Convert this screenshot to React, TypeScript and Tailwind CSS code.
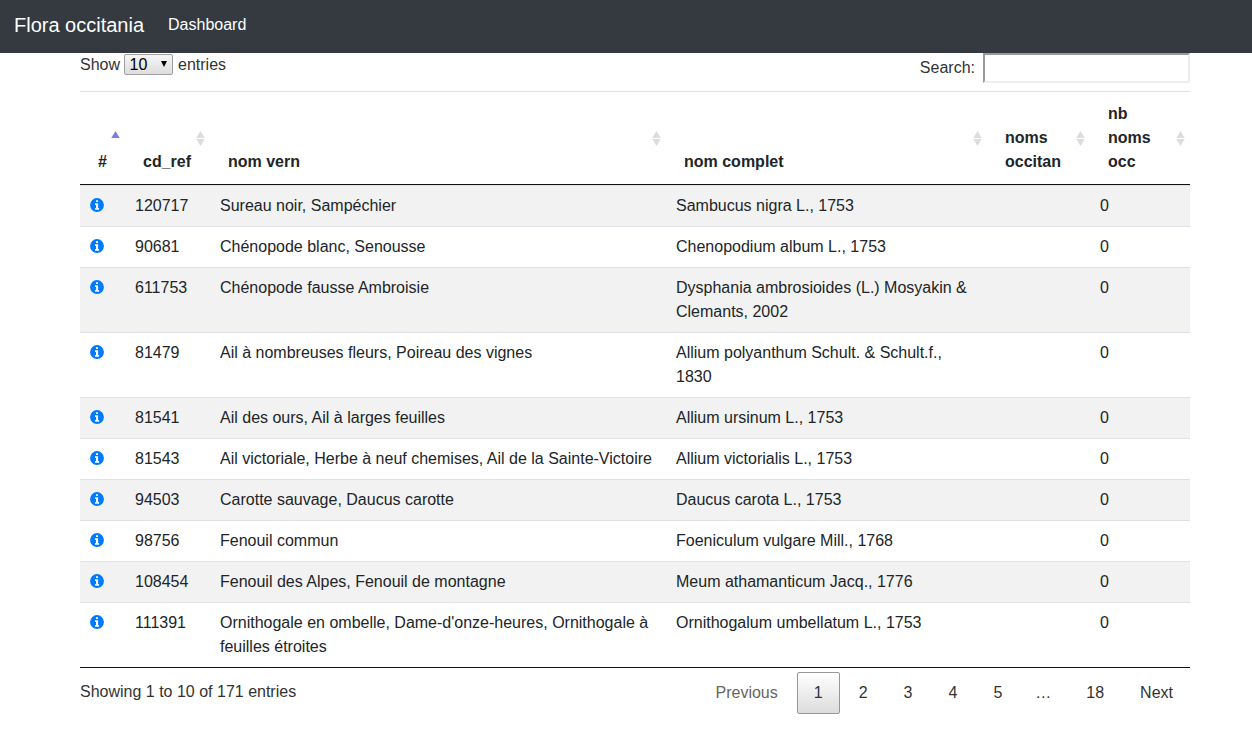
const rows = [
  ['120717', 'Sureau noir, Sampéchier', 'Sambucus nigra L., 1753'],
  ['90681', 'Chénopode blanc, Senousse', 'Chenopodium album L., 1753'],
  ['611753', 'Chénopode fausse Ambroisie', 'Dysphania ambrosioides (L.) Mosyakin & Clemants, 2002'],
  ['81479', 'Ail à nombreuses fleurs, Poireau des vignes', 'Allium polyanthum Schult. & Schult.f., 1830'],
  ['81541', 'Ail des ours, Ail à larges feuilles', 'Allium ursinum L., 1753'],
  ['81543', 'Ail victoriale, Herbe à neuf chemises, Ail de la Sainte-Victoire', 'Allium victorialis L., 1753'],
  ['94503', 'Carotte sauvage, Daucus carotte', 'Daucus carota L., 1753'],
  ['98756', 'Fenouil commun', 'Foeniculum vulgare Mill., 1768'],
  ['108454', 'Fenouil des Alpes, Fenouil de montagne', 'Meum athamanticum Jacq., 1776'],
  ['111391', "Ornithogale en ombelle, Dame-d'onze-heures, Ornithogale à feuilles étroites", 'Ornithogalum umbellatum L., 1753'],
];

const columns = ['#', 'cd_ref', 'nom vern', 'nom complet', 'noms occitan', 'nb noms occ'];

function SortIcon({ active }: { active: boolean }) {
  return (
    <svg className="absolute right-0 top-1/2 -mt-[9px] h-[19px] w-[19px]" viewBox="0 0 19 19">
      {active ? (
        <path d="M9.5 2 L13.7 9 H5.3 Z" fill="#7b80dd" />
      ) : (
        <g fill="#dcdcdc">
          <path d="M9.5 2 L13.7 9 H5.3 Z" />
          <path d="M9.5 17 L13.7 10 H5.3 Z" />
        </g>
      )}
    </svg>
  );
}

function InfoIcon() {
  return (
    <svg className="mt-1 block h-[14px] w-[14px]" viewBox="0 0 14 14" fill="#007bff">
      <path
        fillRule="evenodd"
        d="M7 0.1a6.95 6.95 0 1 1 0 13.9a6.95 6.95 0 1 1 0-13.9zM6 2.2h2v1.9h-2zM5 5.2h3.1v4.8h1v1.8h-4.1v-1.8h1v-3h-1z"
      />
    </svg>
  );
}

function PageButton({ label, current, muted }: { label: string; current?: boolean; muted?: boolean }) {
  return (
    <button
      className={`ml-0.5 rounded-[2px] border px-4 py-2 ${
        current ? 'border-[#979797] bg-linear-to-b from-white to-[#dcdcdc]' : 'border-transparent'
      } ${muted ? 'text-[#666]' : 'text-[#333]'}`}
    >
      {label}
    </button>
  );
}

export default function App() {
  return (
    <div className="h-[752px] overflow-hidden bg-white font-['Liberation_Sans',Arial,sans-serif] text-base leading-6 text-[#212529]">
      <nav className="flex h-[53px] items-center bg-[#343a40] pb-[3px] pl-3.5 text-white">
        <a className="mr-6 text-xl leading-[30px]">Flora occitania</a>
        <a className="-mt-px">Dashboard</a>
      </nav>
      <main className="ml-20 w-[1110px]">
        <div className="flex h-[38px] justify-between text-[#333]">
          <label className="flex h-6 items-center">
            Show
            <span className="-mt-px ml-1 mr-[5px] flex h-[21px] w-[49px] items-center justify-between rounded-[2px] border border-[#a0a0a0] bg-linear-to-b from-[#f6f6f6] to-[#dddddd] pl-[4.5px] pr-[5px] leading-[19px] text-black">
              10
              <svg className="mb-px h-[6px] w-[6px]" viewBox="0 0 6 6">
                <path d="M0 0 H6 L3 6 Z" />
              </svg>
            </span>
            entries
          </label>
          <label className="flex h-[30px] items-center">
            Search:
            <input className="ml-2 h-[30px] w-[207px] border-2 border-b-[#eeeeee] border-l-[#9a9a9a] border-r-[#eeeeee] border-t-[#9a9a9a] bg-white px-1 outline-none" />
          </label>
        </div>
        <table className="w-[1110px] table-fixed border-separate border-spacing-0">
          <colgroup>
            <col className="w-[45px]" />
            <col className="w-[85px]" />
            <col className="w-[456px]" />
            <col className="w-[321px]" />
            <col className="w-[103px]" />
            <col className="w-[100px]" />
          </colgroup>
          <thead>
            <tr>
              {columns.map((name, i) => (
                <th
                  key={name}
                  className="relative border-b border-t border-b-[#111] border-t-[#dee2e6] py-2.5 pl-[18px] pr-[18px] text-left align-bottom font-bold"
                >
                  {name}
                  <SortIcon active={i === 0} />
                </th>
              ))}
            </tr>
          </thead>
          <tbody>
            {rows.map(([ref, vern, complet]) => (
              <tr
                key={ref}
                className="odd:bg-[#f2f2f2] *:border-t *:border-[#dee2e6] *:px-2.5 *:py-2 *:align-top"
              >
                <td><InfoIcon /></td>
                <td>{ref}</td>
                <td className="pr-2!">{vern}</td>
                <td>{complet}</td>
                <td />
                <td>0</td>
              </tr>
            ))}
          </tbody>
        </table>
        <div className="flex justify-between border-t border-[#111] text-[#333]">
          <div className="pt-3">Showing 1 to 10 of 171 entries</div>
          <div className="flex pt-1">
            <PageButton label="Previous" muted />
            <PageButton label="1" current />
            <PageButton label="2" />
            <PageButton label="3" />
            <PageButton label="4" />
            <PageButton label="5" />
            <span className="px-4 py-[9px]">…</span>
            <PageButton label="18" />
            <PageButton label="Next" />
          </div>
        </div>
      </main>
    </div>
  );
}
